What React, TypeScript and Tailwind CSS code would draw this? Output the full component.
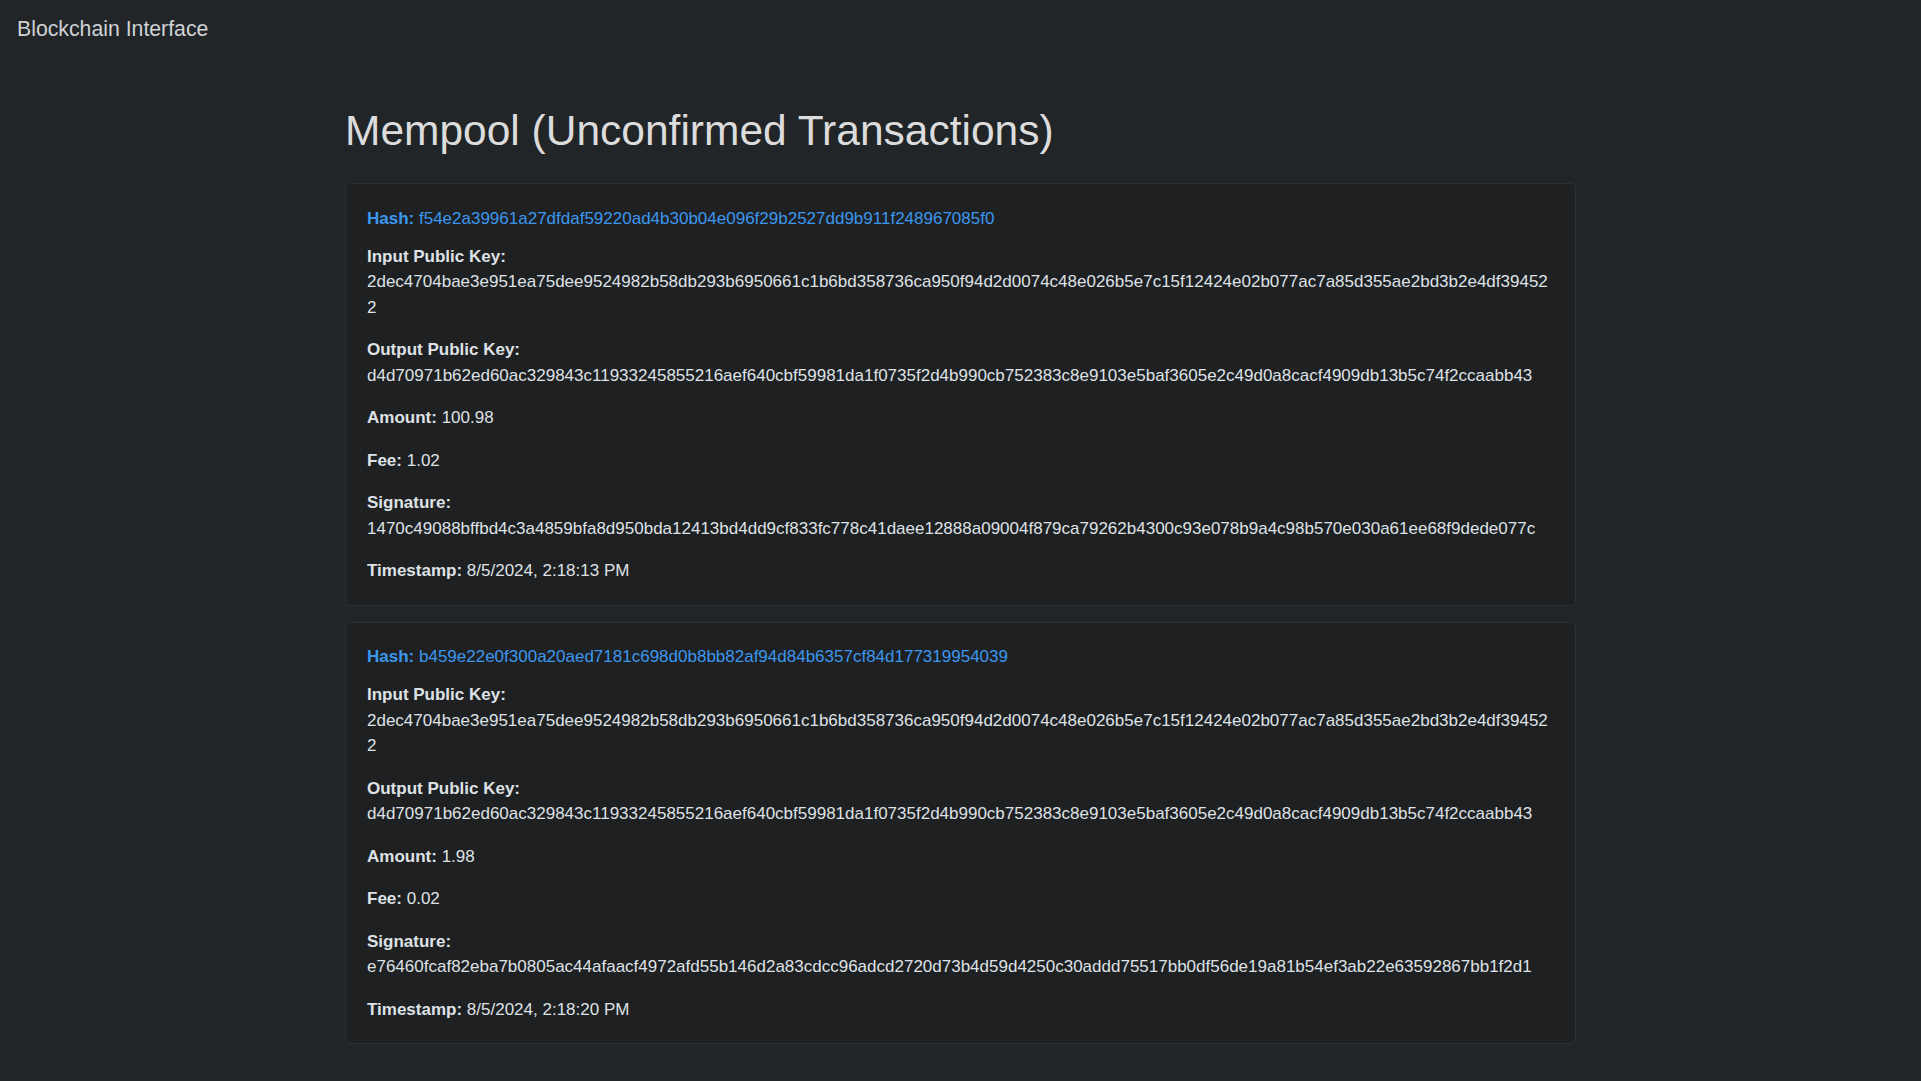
import React from 'react';

type Tx = {
  hash: string;
  input: string;
  output: string;
  amount: string;
  fee: string;
  signature: string;
  timestamp: string;
};

const INPUT_KEY =
  '2dec4704bae3e951ea75dee9524982b58db293b6950661c1b6bd358736ca950f94d2d0074c48e026b5e7c15f12424e02b077ac7a85d355ae2bd3b2e4df394522';
const OUTPUT_KEY =
  'd4d70971b62ed60ac329843c11933245855216aef640cbf59981da1f0735f2d4b990cb752383c8e9103e5baf3605e2c49d0a8cacf4909db13b5c74f2ccaabb43';

const txs: Tx[] = [
  {
    hash: 'f54e2a39961a27dfdaf59220ad4b30b04e096f29b2527dd9b911f248967085f0',
    input: INPUT_KEY,
    output: OUTPUT_KEY,
    amount: '100.98',
    fee: '1.02',
    signature:
      '1470c49088bffbd4c3a4859bfa8d950bda12413bd4dd9cf833fc778c41daee12888a09004f879ca79262b4300c93e078b9a4c98b570e030a61ee68f9dede077c',
    timestamp: '8/5/2024, 2:18:13 PM',
  },
  {
    hash: 'b459e22e0f300a20aed7181c698d0b8bb82af94d84b6357cf84d177319954039',
    input: INPUT_KEY,
    output: OUTPUT_KEY,
    amount: '1.98',
    fee: '0.02',
    signature:
      'e76460fcaf82eba7b0805ac44afaacf4972afd55b146d2a83cdcc96adcd2720d73b4d59d4250c30addd75517bb0df56de19a81b54ef3ab22e63592867bb1f2d1',
    timestamp: '8/5/2024, 2:18:20 PM',
  },
];

function Field({ label, value }: { label: string; value: string }) {
  return (
    <p className="[overflow-wrap:break-word]">
      <strong className="font-bold">{label}:</strong> {value}
    </p>
  );
}

function TxCard({ tx }: { tx: Tx }) {
  return (
    <div className="mb-[16px] rounded-[5px] border border-[#2c2f33] bg-[#1f2022] px-[21px] pt-[21.5px] pb-[21px]">
      <p className="mb-[12.5px] text-[#3b97ee] [overflow-wrap:break-word]">
        <strong className="font-bold">Hash:</strong> {tx.hash}
      </p>
      <div className="flex flex-col gap-[17px]">
        <Field label="Input Public Key" value={tx.input} />
        <Field label="Output Public Key" value={tx.output} />
        <Field label="Amount" value={tx.amount} />
        <Field label="Fee" value={tx.fee} />
        <Field label="Signature" value={tx.signature} />
        <Field label="Timestamp" value={tx.timestamp} />
      </div>
    </div>
  );
}

export default function App() {
  return (
    <div className="min-h-screen bg-[#212528] font-['Liberation_Sans',Arial,sans-serif] text-[17px] leading-[25.5px] text-[#dee2e6]">
      <nav className="px-[17px] pt-[13px] pb-[12px]">
        <span className="text-[21.25px] leading-[32px] text-[#d0d3d6]">Blockchain Interface</span>
      </nav>
      <main className="mx-auto w-[1231px] pt-[48px]">
        <h1 className="mb-[27px] text-[42.5px] leading-[51px] font-medium text-[#dcdcdc]">
          Mempool (Unconfirmed Transactions)
        </h1>
        {txs.map((tx) => (
          <TxCard key={tx.hash} tx={tx} />
        ))}
      </main>
    </div>
  );
}
